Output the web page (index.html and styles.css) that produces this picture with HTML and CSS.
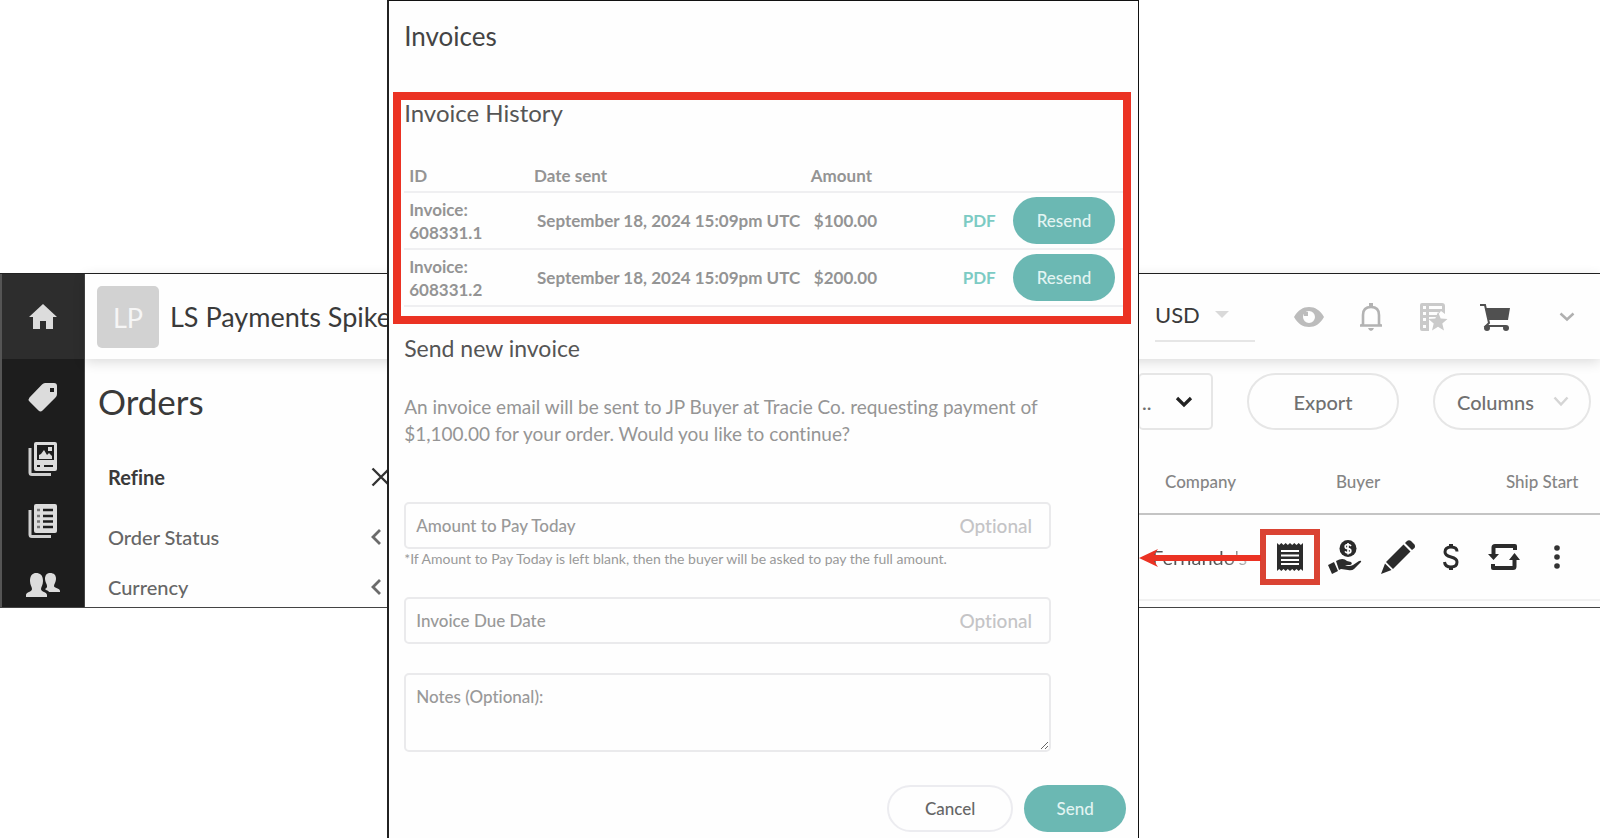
FILE: index.html
```html
<!DOCTYPE html>
<html lang="en">
<head>
<meta charset="UTF-8">
<meta name="viewport" content="width=device-width, initial-scale=1.0">
<title>Orders - Invoices</title>
<link rel="stylesheet" href="styles.css">
</head>
<body>
<div class="app">
  <nav class="sidebar">
    <a class="home" href="#" aria-label="Home">
      <svg width="28" height="26" viewBox="0 0 28 26"><path fill="#dcdcdc" d="M14 0 0 13h4v12h7v-8h6v8h7V13h4z"/></svg>
    </a>
    <a href="#" aria-label="Products">
      <svg width="34" height="34" viewBox="0 0 34 34"><path fill="#dcdcdc" fill-rule="evenodd" d="M19 3h9q3 0 3 3v8q0 2-1.500 3.500L16.500 30.500q-2 1.800-4 0L3.500 21.500q-1.800-2 0-4L16 4.500Q17.300 3 19 3zm5 5v4h4V8z"/></svg>
    </a>
    <a href="#" aria-label="Catalogs">
      <svg width="34" height="34" viewBox="0 0 34 34">
        <path fill="none" stroke="#cfcfcf" stroke-width="3" d="M4 6v24.500q0 2 2 2h19"/>
        <rect x="8" y="0" width="23" height="29" rx="2" fill="#dcdcdc"/>
        <path fill="#1d1d1d" d="M11 3h17v15H11z"/>
        <path fill="#dcdcdc" d="M13 17v-4l2-1 3-4 3 5 2-2 3 3v3zM22 5h4v4h-4z"/>
        <path stroke="#1d1d1d" stroke-width="2" d="M11 24h3M18 24h9"/>
      </svg>
    </a>
    <a href="#" aria-label="Orders">
      <svg width="34" height="34" viewBox="0 0 34 34">
        <path fill="none" stroke="#cfcfcf" stroke-width="3" d="M4 6v24.500q0 2 2 2h19"/>
        <rect x="8" y="0" width="23" height="29" rx="2" fill="#dcdcdc"/>
        <path stroke="#1d1d1d" stroke-width="2.500" d="M17 6h10M17 12h10M17 17.500h10M17 23h10"/>
        <path stroke="#777" stroke-width="2.500" d="M11 6h3M11 12h3M11 17.500h3M11 23h3"/>
      </svg>
    </a>
    <a href="#" aria-label="Buyers">
      <svg width="34" height="34" viewBox="0 0 34 34">
        <path fill="#dcdcdc" d="M10 7c4 0 7 2 7 8 0 4-2 6-2 8 0 3 6 3 6 6v2H0v-2c0-3 6-3 6-6 0-2-2-4-2-8 0-6 3-8 6-8zM24 7c4 0 6 2 6 6 0 3-2 5-2 7 0 2 6 2 6 5v1H23c-1-2-4-2-4-3 2-1 2-2 2-3 0-2-2-4-2-7 0-4 2-6 5-6z"/>
      </svg>
    </a>
  </nav>

  <div class="content">
    <header class="topbar">
      <span class="avatar">LP</span>
      <span class="shop-name">LS Payments Spike</span>
      <div class="top-actions">
        <span class="currency">
          <select aria-label="Currency"><option>USD</option></select>
          <svg class="caret" width="14" height="7" viewBox="0 0 14 7"><path fill="#d9d9d9" d="M0 0h14L7 7z"/></svg>
        </span>
        <button class="icon-btn" aria-label="Preview">
          <svg width="32" height="32" viewBox="0 0 32 32"><path fill="#bcbcbc" fill-rule="evenodd" d="M1 16C5 9 10 6 16 6s11 3 15 10c-4 7-9 10-15 10S5 23 1 16zm15-6a6 6 0 1 0 0 12 6 6 0 0 0 0-12z"/><path fill="#bcbcbc" d="M11 11h4v4h-4z"/></svg>
        </button>
        <button class="icon-btn" aria-label="Notifications">
          <svg width="32" height="32" viewBox="0 0 32 32"><path fill="none" stroke="#b3b3b3" stroke-width="2.600" d="M5 24.500h22M8 25V14q0-8 8-8t8 8v11"/><path fill="#b3b3b3" d="M14 2h4v5h-4zM13 27h6q-1 3-3 3t-3-3zM5 25l4-5v5zM27 25l-4-5v5z"/></svg>
        </button>
        <button class="icon-btn" aria-label="Saved lists">
          <svg width="32" height="32" viewBox="0 0 32 32"><path fill="#cacaca" fill-rule="evenodd" d="M5 2h20q3 0 3 3v8l-4-3-5 6h-7v14H5q-2 0-2-2V4q0-2 2-2zm1 3v3h3V5zm6 0v3h13V5zM6 11v3h3v-3zm6 0v3h8l2-3zM6 17v3h3v-3zM6 24v3h3v-3z"/><path fill="#cacaca" d="m21 11 2.700 6.500 6.800.5-5.200 4.500 1.700 7-6-3.800-6 3.800 1.700-7L11.500 18l6.800-.5z"/></svg>
        </button>
        <button class="icon-btn" aria-label="Cart">
          <svg width="32" height="32" viewBox="0 0 32 32"><path fill="#505050" d="M6 7h25l-2 12H10z"/><path fill="none" stroke="#505050" stroke-width="2" d="M1 4h5l4 18-3 3h20"/><circle cx="8" cy="27" r="3" fill="#505050"/><circle cx="27" cy="27" r="3" fill="#505050"/></svg>
        </button>
        <button class="icon-btn more" aria-label="Account menu">
          <svg width="16" height="10" viewBox="0 0 16 10"><path fill="none" stroke="#b0b0b0" stroke-width="2.500" d="m1.500 1.500 6.500 6 6.500-6"/></svg>
        </button>
      </div>
    </header>

    <div class="page">
      <section class="filters">
        <h1>Orders</h1>
        <div class="filter-head">
          <h2>Refine</h2>
          <button aria-label="Close filters"><svg width="20" height="20" viewBox="0 0 20 20"><path stroke="#333" stroke-width="2.400" d="m1.500 1.500 17 17M18.500 1.500l-17 17"/></svg></button>
        </div>
        <button class="filter">Order Status
          <svg width="20" height="18" viewBox="0 0 20 18"><path fill="none" stroke="#6b6b6b" stroke-width="2.800" d="M9 2 2 9l7 7"/></svg>
        </button>
        <button class="filter">Currency
          <svg width="20" height="18" viewBox="0 0 20 18"><path fill="none" stroke="#6b6b6b" stroke-width="2.800" d="M9 2 2 9l7 7"/></svg>
        </button>
      </section>

      <section class="orders">
        <div class="toolbar">
          <button class="dropdown">.. <svg width="18" height="12" viewBox="0 0 18 12"><path fill="none" stroke="#222" stroke-width="3.200" d="m2 2 7 7 7-7"/></svg></button>
          <button class="pill export">Export</button>
          <button class="pill columns">Columns <svg width="16" height="11" viewBox="0 0 16 11"><path fill="none" stroke="#d5d5d5" stroke-width="2.500" d="m1.500 1.500 6.500 7 6.500-7"/></svg></button>
        </div>
        <table class="orders-table">
          <thead>
            <tr><th class="company">Company</th><th class="buyer">Buyer</th><th>Ship Start</th></tr>
          </thead>
          <tbody>
            <tr>
              <td colspan="3">
                <div class="order-row">
                  <span class="company-name">Fernando's</span>
                  <svg class="arrow" width="122" height="20" viewBox="0 0 122 20"><path fill="#eb3223" d="M0 10 19 1l-4 6h107v6H15l4 6z"/></svg>
                  <button class="row-btn invoice" aria-label="Invoices">
                    <svg width="26" height="28" viewBox="0 0 26 28"><path fill="#2b2b2b" d="M0 0l2.200 2 2.100-2 2.200 2 2.200-2 2.100 2L13 0l2.200 2 2.100-2 2.200 2 2.200-2 2.100 2L26 0v28l-2.200-2-2.100 2-2.200-2-2.200 2-2.100-2-2.200 2-2.200-2-2.100 2-2.200-2-2.200 2-2.100-2L0 28z"/><path stroke="#fff" stroke-width="2" d="M4 8h18M4 12.500h18M4 17h18M4 21h18"/></svg>
                  </button>
                  <button class="row-btn" aria-label="Payment">
                    <svg width="34" height="34" viewBox="0 0 34 34"><circle cx="20" cy="8.500" r="8.500" fill="#2b2b2b"/><path fill="none" stroke="#fff" stroke-width="1.700" d="M23 6q-1-1.500-3-1.500-2.800 0-2.800 2T20 8.700t2.800 2.200q0 2-2.800 2-2 0-3-1.500M20 3v11.500"/><path fill="#2b2b2b" d="m0 25 6-3 4 9-6 3zM8 21q7-4 11 0l4 1q2 2-1 3h-5q4 2 8 0l6-4q3-1 2 1l-7 7q-2 2-6 1l-7-1-2 1z"/></svg>
                  </button>
                  <button class="row-btn" aria-label="Edit">
                    <svg width="34" height="34" viewBox="0 0 34 34"><path fill="#2b2b2b" d="m22.500 4.500 7 7L12 29l-7-7zM24 3l2-2q2-1.500 4 0l3.500 3.500q1 2 0 3.500L31 10zM4 23.500l6.500 6.500L0 34z"/></svg>
                  </button>
                  <button class="row-btn" aria-label="Charge">
                    <svg width="34" height="34" viewBox="0 0 34 34"><path fill="none" stroke="#2b2b2b" stroke-width="3" d="M23 11.500q0-4.500-6-4.500t-6 5q0 3.500 6 5t6 5q0 5-6 5t-6.500-5"/><path stroke="#2b2b2b" stroke-width="4" d="M17 4v4M17 26v4"/></svg>
                  </button>
                  <button class="row-btn" aria-label="Reorder">
                    <svg width="34" height="34" viewBox="0 0 34 34"><path fill="none" stroke="#2b2b2b" stroke-width="4" stroke-linejoin="round" d="M6.500 15V7.500Q6.500 6 8 6h20v4M27.500 19v7.500q0 1.500-1.500 1.500H6v-4"/><path fill="#2b2b2b" d="M1 14h11l-5.500 6zM22 20h11l-5.500-7z"/></svg>
                  </button>
                  <button class="row-btn" aria-label="More actions">
                    <svg width="34" height="34" viewBox="0 0 34 34"><g fill="#333"><circle cx="17" cy="8" r="2.800"/><circle cx="17" cy="17" r="2.800"/><circle cx="17" cy="26" r="2.800"/></g></svg>
                  </button>
                </div>
              </td>
            </tr>
          </tbody>
        </table>
      </section>
    </div>
  </div>
</div>

<div class="modal" role="dialog" aria-labelledby="modal-title">
  <h2 id="modal-title" class="modal-title">Invoices</h2>

  <section class="history">
    <h3>Invoice History</h3>
    <table>
      <thead>
        <tr><th class="col-id">ID</th><th class="col-date">Date sent</th><th class="col-amount">Amount</th><th class="col-pdf"></th><th class="col-resend"></th></tr>
      </thead>
      <tbody>
        <tr>
          <td class="id">Invoice: 608331.1</td>
          <td>September 18, 2024 15:09pm UTC</td>
          <td>$100.00</td>
          <td><a href="#">PDF</a></td>
          <td><button class="btn btn-teal">Resend</button></td>
        </tr>
        <tr>
          <td class="id">Invoice: 608331.2</td>
          <td>September 18, 2024 15:09pm UTC</td>
          <td>$200.00</td>
          <td><a href="#">PDF</a></td>
          <td><button class="btn btn-teal">Resend</button></td>
        </tr>
      </tbody>
    </table>
  </section>

  <form class="new-invoice">
    <h3>Send new invoice</h3>
    <p class="message">An invoice email will be sent to JP Buyer at Tracie Co. requesting payment of $1,100.00 for your order. Would you like to continue?</p>
    <div class="field">
      <label for="amount">Amount to Pay Today</label>
      <input type="text" id="amount" placeholder="Optional">
    </div>
    <p class="hint">*If Amount to Pay Today is left blank, then the buyer will be asked to pay the full amount.</p>
    <div class="field">
      <label for="due-date">Invoice Due Date</label>
      <input type="text" id="due-date" placeholder="Optional">
    </div>
    <textarea id="notes" aria-label="Notes" placeholder="Notes (Optional):"></textarea>
    <div class="modal-actions">
      <button type="button" class="btn btn-cancel">Cancel</button>
      <button type="button" class="btn btn-teal">Send</button>
    </div>
  </form>
</div>
</body>
</html>
```

FILE: styles.css
```css
* {
  box-sizing: border-box;
}

body {
  margin: 0;
  position: relative;
  min-height: 100vh;
  background: #fff;
  font-family: Lato, "Liberation Sans", sans-serif;
  font-variant-ligatures: none;
  color: #3a3a3a;
  overflow-x: hidden;
}

h1, h2, h3, p {
  margin: 0;
  font-weight: normal;
}

button, input, select, textarea {
  font-family: inherit;
  font-weight: inherit;
  font-variant-ligatures: inherit;
  color: inherit;
  background: none;
  border: none;
  padding: 0;
}

button {
  cursor: pointer;
}

svg {
  display: block;
  flex: none;
}

/* Orders page */
.app {
  display: flex;
  margin-top: 273px;
  border-top: 1px solid #222;
  border-bottom: 1px solid #444;
  background: #fefefe;
}

.sidebar {
  display: flex;
  flex-direction: column;
  align-items: center;
  gap: 28px;
  flex: none;
  width: 85px;
  background: #1d1d1d;
  border-left: 2px solid #555;
  border-right: 1px solid #444;
}

.sidebar .home {
  display: flex;
  align-items: center;
  justify-content: center;
  width: 100%;
  height: 85px;
  margin-bottom: -7px;
  background: #2d2d2d;
}

.content {
  flex: 1;
  min-width: 0;
}

.topbar {
  display: flex;
  align-items: center;
  height: 85px;
  padding: 0 17px 0 12px;
  box-shadow: 0 3px 12px rgba(0, 0, 0, 0.14);
}

.avatar {
  width: 62px;
  height: 62px;
  border-radius: 5px;
  background: #d2d2d2;
  color: #f6f6f6;
  font-size: 27px;
  line-height: 64px;
  text-align: center;
}

.shop-name {
  margin-left: 11px;
  font-size: 27px;
  white-space: nowrap;
}

.top-actions {
  display: flex;
  align-items: center;
  margin-left: auto;
}

.currency {
  display: flex;
  align-items: center;
  width: 100px;
  height: 50px;
  padding-bottom: 3px;
  margin-right: 38px;
  border-bottom: 2px solid #e6e6e6;
}

.currency select {
  appearance: none;
  width: 60px;
  font-size: 22px;
}

.icon-btn {
  width: 32px;
  height: 32px;
  margin-right: 30px;
}

.icon-btn.more {
  display: flex;
  align-items: center;
  justify-content: center;
  margin: 0 0 0 10px;
}

.page {
  display: flex;
  justify-content: space-between;
}

.filters {
  width: 306px;
  padding: 22px 0 0 13px;
}

.filters h1 {
  font-size: 35px;
  line-height: 40px;
}

.filter-head,
.filter {
  display: flex;
  align-items: center;
  justify-content: space-between;
  width: 100%;
  padding-left: 10px;
}

.filter-head {
  height: 26px;
  margin-top: 43px;
}

.filter-head h2 {
  font-size: 20px;
  font-weight: bold;
}

.filter {
  height: 26px;
  margin-top: 24px;
  font-size: 20px;
  font-weight: 500;
  color: #666;
}

.filter-head + .filter {
  margin-top: 34px;
}

.orders {
  width: 462px;
  padding-top: 14px;
}

.toolbar {
  display: flex;
  justify-content: flex-end;
  gap: 34px;
  padding-right: 9px;
}

.toolbar button {
  height: 57px;
  border: 2px solid #e6e6e6;
  font-size: 20px;
  font-weight: 500;
  color: #707070;
}

.toolbar .dropdown {
  display: flex;
  align-items: center;
  justify-content: space-between;
  flex: 1;
  padding: 0 18px 0 2px;
  border-radius: 5px;
}

.toolbar .pill {
  border-radius: 29px;
}

.export {
  width: 152px;
}

.toolbar .columns {
  display: flex;
  align-items: center;
  justify-content: space-between;
  width: 158px;
  padding: 0 20px 0 22px;
}

.orders-table {
  width: 100%;
  border-collapse: collapse;
}

.orders-table th {
  height: 84px;
  padding: 20px 0 0;
  border-bottom: 2px solid #c4c4c4;
  font-size: 17px;
  font-weight: 500;
  text-align: left;
  color: #858585;
}

.orders-table .company {
  width: 198px;
  padding-left: 27px;
}

.orders-table .buyer {
  width: 170px;
}

.orders-table td {
  padding: 0 0 6px;
}

.order-row {
  display: flex;
  align-items: center;
  position: relative;
  height: 86px;
  border-bottom: 2px solid #f1f1f1;
}

.company-name {
  flex: 1;
  padding-left: 14px;
  font-size: 20px;
  background: linear-gradient(90deg, #555 70%, #ddd 95%);
  background-clip: text;
  color: transparent;
}

.row-btn {
  display: flex;
  align-items: center;
  justify-content: center;
  width: 34px;
  height: 34px;
  margin-right: 19px;
}

.row-btn.invoice {
  width: 60px;
  height: 56px;
  margin-right: 8px;
  border: 6px solid #da4333;
}

.row-btn:last-child {
  margin-right: 26px;
}

/* arrow from the highlighted button to the dialog */
.arrow {
  position: absolute;
  left: 1px;
  top: 33px;
  z-index: 2;
}

/* Invoices dialog */
.modal {
  position: absolute;
  top: 0;
  left: 24.2%;
  width: 47%;
  min-height: 100vh;
  padding: 0 7px 0 4px;
  border: 1px solid #111;
  border-left: 2px solid #222;
  border-bottom: none;
  background: #fefefe;
  font-weight: 500;
  color: #555;
}

.modal-title {
  padding: 19px 11px 0;
  font-size: 26px;
  line-height: 32px;
  color: #444;
}

.history {
  margin-top: 40px;
  padding: 0 0 9px 3px;
  border: 8px solid #eb3223;
}

.modal h3 {
  font-size: 24px;
  line-height: 26px;
}

.history table {
  width: 100%;
  margin-top: 34px;
  border-collapse: collapse;
  table-layout: fixed;
  font-size: 17px;
  font-weight: bold;
  color: #949494;
}

.history th {
  height: 32px;
  padding: 0 4px;
  text-align: left;
}

.history tr {
  border-bottom: 2px solid #efeff1;
}

.history td {
  height: 57px;
  padding: 0 0 0 7px;
  white-space: nowrap;
}

.history td.id {
  padding: 0 24px 0 5px;
  line-height: 23px;
  white-space: normal;
}

.history a {
  color: #7ccbc4;
  text-decoration: none;
}

.history th.col-id {
  width: 17.5%;
  padding-left: 5px;
}

.col-date {
  width: 38.5%;
}

.col-amount {
  width: 20.7%;
}

.col-pdf {
  width: 7%;
}

.btn {
  min-width: 102px;
  height: 47px;
  border-radius: 24px;
  font-size: 17px;
  font-weight: 500;
}

.btn-teal {
  display: block;
  background: #6bb8b3;
  color: #e2f4f2;
}

.btn-cancel {
  min-width: 126px;
  border: 2px solid #ececf0;
  color: #666;
}

.new-invoice {
  padding: 11px 5px 7px 11px;
}

.modal .new-invoice h3 {
  font-size: 23px;
}

.message {
  width: 650px;
  max-width: 100%;
  margin: 32px 0 55px;
  font-size: 19px;
  line-height: 27px;
  color: #959595;
}

.field,
.new-invoice textarea {
  width: 89.6%;
  border: 2px solid #eaeaec;
  border-radius: 5px;
  font-size: 17px;
  color: #999;
}

.field {
  display: flex;
  align-items: center;
  height: 47px;
  padding: 0 17px 0 10px;
}

.field input {
  flex: 1;
  min-width: 0;
  text-align: right;
  font-size: 19px;
}

.field input::placeholder {
  color: #c4c4c6;
}

.hint {
  height: 48px;
  padding-top: 1px;
  font-size: 14px;
  line-height: 18px;
  color: #999;
}

.new-invoice textarea {
  display: block;
  height: 79px;
  margin-top: 29px;
  padding: 11px 10px;
}

.new-invoice textarea::placeholder {
  color: #999;
}

.modal-actions {
  display: flex;
  justify-content: flex-end;
  gap: 11px;
  margin-top: 33px;
}
```
